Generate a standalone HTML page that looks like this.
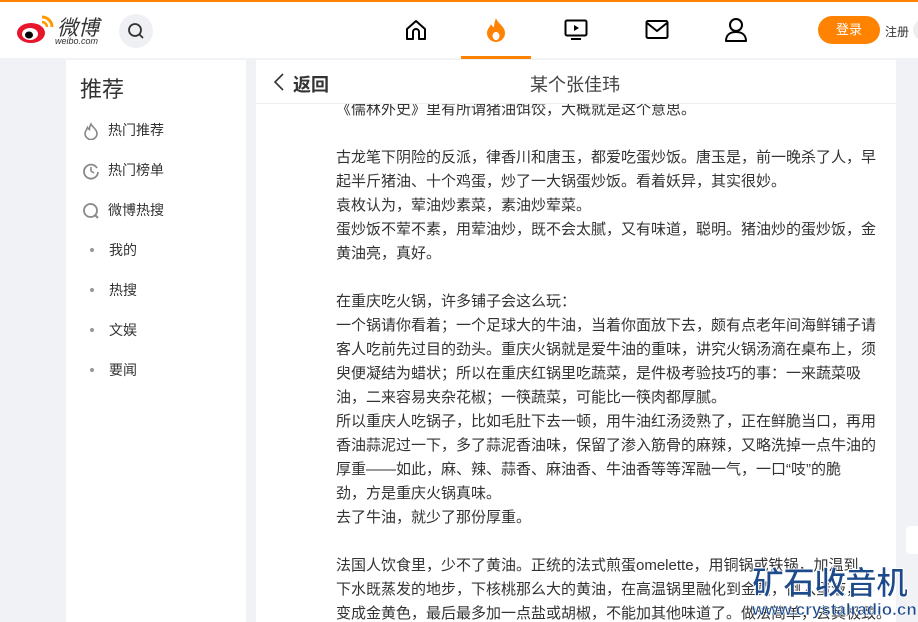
<!DOCTYPE html>
<html><head><meta charset="utf-8"><style>
*{margin:0;padding:0;box-sizing:border-box}
body{width:918px;height:622px;overflow:hidden;background:#f1f2f5;font-family:"Liberation Sans","Noto Sans CJK SC",sans-serif;color:#333;position:relative}
.hdr{position:absolute;left:0;top:0;width:918px;height:58px;background:#fff;border-top:2px solid #ff8200}
.side{position:absolute;left:66px;top:60px;width:180px;height:562px;background:#fff}
.side h2{position:absolute;left:14px;top:12px;font-size:22px;font-weight:normal;color:#333}
.it{position:absolute;left:16px;font-size:14px;color:#333;height:20px;line-height:20px}
.it .ic{display:inline-block;width:18px;height:18px;vertical-align:middle;margin-right:8px}
.dot{display:inline-block;width:4px;height:4px;border-radius:50%;background:#999;margin:0 15px 3px 8px;vertical-align:middle}
.main{position:absolute;left:256px;top:60px;width:640px;height:562px;background:#fff;overflow:hidden}
.tb{position:absolute;left:0;top:0;width:640px;height:44px;border-bottom:1px solid #eee;background:#fff;z-index:2}
.txt{position:absolute;left:80px;top:38px;font-size:15px;line-height:24px;white-space:nowrap;color:#333}
.txt p{height:24px}
</style></head><body>
<div class="hdr">
 <svg style="position:absolute;left:16px;top:11px" width="40" height="32" viewBox="0 0 40 32"><ellipse cx="15" cy="20" rx="14" ry="10" fill="#e6162d"/><ellipse cx="14" cy="21" rx="8" ry="6" fill="#fff"/><ellipse cx="13" cy="22" rx="4" ry="3.5" fill="#000"/><path d="M26 4a10 10 0 0 1 10 10" stroke="#f90" stroke-width="3" fill="none"/><path d="M26 9a5 5 0 0 1 5 5" stroke="#f90" stroke-width="2.5" fill="none"/></svg>
 <div style="position:absolute;left:57px;top:10px;font-size:21px;font-style:italic;color:#333">微博</div>
 <div style="position:absolute;left:55px;top:34px;font-size:9px;font-style:italic;color:#333">weibo.com</div>
 <div style="position:absolute;left:119px;top:12px;width:34px;height:34px;border-radius:50%;background:#eff0f3"></div>
 <svg style="position:absolute;left:127px;top:20px" width="18" height="18" viewBox="0 0 18 18"><circle cx="8" cy="8" r="6" stroke="#333" stroke-width="1.8" fill="none"/><path d="M12.5 12.5L16 16" stroke="#333" stroke-width="1.8"/></svg>
 <svg style="position:absolute;left:404px;top:16px" width="24" height="24" viewBox="0 0 24 24"><path d="M3 11L12 3l9 8v10h-6v-7a3 3 0 0 0-6 0v7H3z" stroke="#000" stroke-width="2" fill="none" stroke-linejoin="round"/></svg>
 <svg style="position:absolute;left:484px;top:14px" width="24" height="28" viewBox="0 0 24 28"><path d="M12 2c1 5 9 8 9 15a9 9 0 0 1-18 0c0-4 3-6 4-9 1 2 2 3 3 3 0-3 1-6 2-9z" fill="#ff8200"/><ellipse cx="12" cy="20" rx="3.5" ry="4" fill="#fff"/></svg>
 <div style="position:absolute;left:461px;top:54px;width:70px;height:3px;background:#ff8200"></div>
 <svg style="position:absolute;left:564px;top:17px" width="24" height="22" viewBox="0 0 24 22"><rect x="1.5" y="1.5" width="21" height="15" rx="1.5" stroke="#000" stroke-width="2" fill="none"/><path d="M10 6l5 3-5 3z" fill="#000"/><path d="M7 20h10" stroke="#000" stroke-width="2"/></svg>
 <svg style="position:absolute;left:645px;top:17px" width="24" height="22" viewBox="0 0 24 22"><rect x="1.5" y="2" width="21" height="17" rx="1.5" stroke="#000" stroke-width="2" fill="none"/><path d="M2 4l10 8 10-8" stroke="#000" stroke-width="2" fill="none"/></svg>
 <svg style="position:absolute;left:724px;top:15px" width="24" height="26" viewBox="0 0 24 26"><circle cx="12" cy="8" r="6" stroke="#000" stroke-width="2" fill="none"/><path d="M2 24c0-6 4-9 10-9s10 3 10 9z" stroke="#000" stroke-width="2" fill="none" stroke-linejoin="round"/></svg>
 <div style="position:absolute;left:818px;top:14px;width:62px;height:28px;border-radius:14px;background:#ff8200;color:#fff;font-size:13px;line-height:28px;text-align:center">登录</div>
 <div style="position:absolute;left:885px;top:21px;font-size:12px;color:#333">注册</div>
 <div style="position:absolute;left:913px;top:18px;width:20px;height:20px;border-radius:50%;background:#eee"></div>
</div>
<div class="side">
 <h2>推荐</h2>
 <div class="it" style="top:60px"><svg class="ic" viewBox="0 0 18 18"><path d="M9 2c1 3 6 5 6 9.5a6 6 0 0 1-12 0c0-2.5 2-4 2.5-6 1 1.5 2 2 2 2 0-2 .5-4 1.5-5.5z" stroke="#888" stroke-width="1.6" fill="none"/></svg>热门推荐</div>
 <div class="it" style="top:100px"><svg class="ic" viewBox="0 0 18 18"><path d="M15 6A7 7 0 1 0 16 10" stroke="#888" stroke-width="1.8" fill="none"/><path d="M9 5v4l3 2" stroke="#888" stroke-width="1.6" fill="none"/></svg>热门榜单</div>
 <div class="it" style="top:140px"><svg class="ic" viewBox="0 0 18 18"><circle cx="8.5" cy="8.5" r="6.5" stroke="#888" stroke-width="1.8" fill="none"/><path d="M13 13l3 3" stroke="#888" stroke-width="2"/></svg>微博热搜</div>
 <div class="it" style="top:180px"><span class="dot"></span>我的</div>
 <div class="it" style="top:220px"><span class="dot"></span>热搜</div>
 <div class="it" style="top:260px"><span class="dot"></span>文娱</div>
 <div class="it" style="top:300px"><span class="dot"></span>要闻</div>
</div>
<div class="main">
 <div class="tb">
  <svg style="position:absolute;left:16px;top:12px" width="14" height="20" viewBox="0 0 14 20"><path d="M11 2L3 10l8 8" stroke="#333" stroke-width="1.6" fill="none"/></svg>
  <div style="position:absolute;left:37px;top:11px;font-size:18px;font-weight:bold;color:#333">返回</div>
  <div style="position:absolute;left:274px;top:11px;font-size:18px;color:#444">某个张佳玮</div>
 </div>
 <div class="txt">
  <p>《儒林外史》里有所谓猪油饵饺，大概就是这个意思。</p>
  <p></p>
  <p>古龙笔下阴险的反派，律香川和唐玉，都爱吃蛋炒饭。唐玉是，前一晚杀了人，早</p>
  <p>起半斤猪油、十个鸡蛋，炒了一大锅蛋炒饭。看着妖异，其实很妙。</p>
  <p>袁枚认为，荤油炒素菜，素油炒荤菜。</p>
  <p>蛋炒饭不荤不素，用荤油炒，既不会太腻，又有味道，聪明。猪油炒的蛋炒饭，金</p>
  <p>黄油亮，真好。</p>
  <p></p>
  <p>在重庆吃火锅，许多铺子会这么玩：</p>
  <p>一个锅请你看着；一个足球大的牛油，当着你面放下去，颇有点老年间海鲜铺子请</p>
  <p>客人吃前先过目的劲头。重庆火锅就是爱牛油的重味，讲究火锅汤滴在桌布上，须</p>
  <p>臾便凝结为蜡状；所以在重庆红锅里吃蔬菜，是件极考验技巧的事：一来蔬菜吸</p>
  <p>油，二来容易夹杂花椒；一筷蔬菜，可能比一筷肉都厚腻。</p>
  <p>所以重庆人吃锅子，比如毛肚下去一顿，用牛油红汤烫熟了，正在鲜脆当口，再用</p>
  <p>香油蒜泥过一下，多了蒜泥香油味，保留了渗入筋骨的麻辣，又略洗掉一点牛油的</p>
  <p>厚重——如此，麻、辣、蒜香、麻油香、牛油香等等浑融一气，一口“吱”的脆</p>
  <p>劲，方是重庆火锅真味。</p>
  <p>去了牛油，就少了那份厚重。</p>
  <p></p>
  <p>法国人饮食里，少不了黄油。正统的法式煎蛋omelette，用铜锅或铁锅，加温到</p>
  <p>下水既蒸发的地步，下核桃那么大的黄油，在高温锅里融化到金黄，倒入蛋液，</p>
  <p>变成金黄色，最后最多加一点盐或胡椒，不能加其他味道了。做法简单，去其极致。</p>
 </div>
</div>
<div style="position:absolute;left:906px;top:526px;width:12px;height:28px;background:#fff;border-radius:4px 0 0 4px"></div>
<div style="position:absolute;left:752px;top:558px;font-size:32px;font-weight:bold;color:#1c4a8a;letter-spacing:-1px;white-space:nowrap;-webkit-text-stroke:1px #fff">矿石收音机</div>
<div style="position:absolute;left:752px;top:600px;font-size:17px;font-weight:bold;color:#1c4a8a;white-space:nowrap;-webkit-text-stroke:.5px #fff">www.crystalradio.cn</div>
</body></html>
